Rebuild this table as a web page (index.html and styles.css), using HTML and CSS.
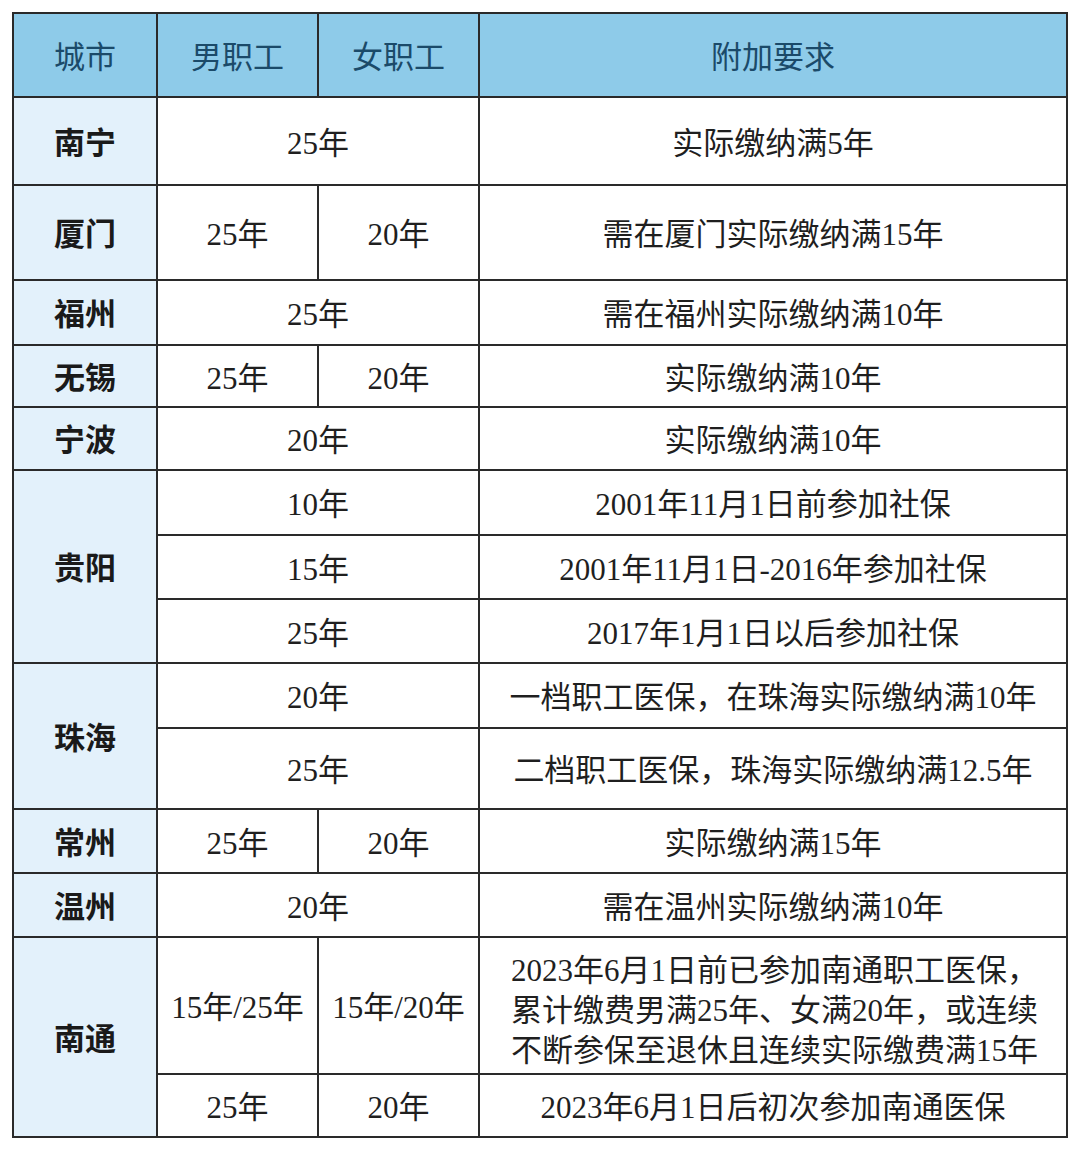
FILE: index.html
```html
<!DOCTYPE html>
<html lang="zh-CN">
<head>
<meta charset="utf-8">
<title>医保缴费年限</title>
<link rel="stylesheet" href="styles.css">
</head>
<body>
<div class="table">
  <div class="c head r1">城市</div>
  <div class="c head">男职工</div>
  <div class="c head">女职工</div>
  <div class="c head">附加要求</div>

  <div class="c city">南宁</div>
  <div class="c span2">25年</div>
  <div class="c">实际缴纳满5年</div>

  <div class="c city">厦门</div>
  <div class="c">25年</div>
  <div class="c">20年</div>
  <div class="c">需在厦门实际缴纳满15年</div>

  <div class="c city">福州</div>
  <div class="c span2">25年</div>
  <div class="c">需在福州实际缴纳满10年</div>

  <div class="c city">无锡</div>
  <div class="c">25年</div>
  <div class="c">20年</div>
  <div class="c">实际缴纳满10年</div>

  <div class="c city">宁波</div>
  <div class="c span2">20年</div>
  <div class="c">实际缴纳满10年</div>

  <div class="c city rows3">贵阳</div>
  <div class="c span2">10年</div>
  <div class="c">2001年11月1日前参加社保</div>
  <div class="c span2">15年</div>
  <div class="c">2001年11月1日-2016年参加社保</div>
  <div class="c span2">25年</div>
  <div class="c">2017年1月1日以后参加社保</div>

  <div class="c city rows2">珠海</div>
  <div class="c span2">20年</div>
  <div class="c">一档职工医保，在珠海实际缴纳满10年</div>
  <div class="c span2">25年</div>
  <div class="c">二档职工医保，珠海实际缴纳满12.5年</div>

  <div class="c city">常州</div>
  <div class="c">25年</div>
  <div class="c">20年</div>
  <div class="c">实际缴纳满15年</div>

  <div class="c city">温州</div>
  <div class="c span2">20年</div>
  <div class="c">需在温州实际缴纳满10年</div>

  <div class="c city rows2">南通</div>
  <div class="c">15年/25年</div>
  <div class="c">15年/20年</div>
  <div class="c multi">2023年6月1日前已参加南通职工医保，<br>累计缴费男满25年、女满20年，或连续<br>不断参保至退休且连续实际缴费满15年</div>
  <div class="c">25年</div>
  <div class="c">20年</div>
  <div class="c">2023年6月1日后初次参加南通医保</div>
</div>
</body>
</html>
```

FILE: styles.css
```css
html, body {
  margin: 0;
  padding: 0;
  background: #ffffff;
}
body {
  padding: 12px;
  font-family: "Liberation Serif", "Noto Sans CJK SC", serif;
  color: #1f1f1f;
}
.table {
  width: 1056px;
  display: grid;
  grid-template-columns: 142px 159px 159px 586px;
  grid-template-rows: 82px 86px 93px 63px 60px 61px 63px 62px 62px 63px 79px 62px 62px 135px 61px;
  gap: 2px;
  padding: 2px;
  box-sizing: border-box;
  background: #2a2a2a;
}
.c {
  background: #ffffff;
  display: flex;
  align-items: center;
  justify-content: center;
  font-size: 31px;
  line-height: 1;
  white-space: nowrap;
  padding-top: 4px;
  box-sizing: border-box;
}
.head {
  background: #8ecbe9;
  color: #1b4a69;
}
.city {
  background: #e3f1fb;
  font-weight: 700;
  color: #1a1a1a;
}
.span2 {
  grid-column: span 2;
}
.rows2 {
  grid-row: span 2;
}
.rows3 {
  grid-row: span 3;
}
.multi {
  justify-content: flex-start;
  padding-left: 31px;
  padding-top: 10px;
  line-height: 40px;
}
```
